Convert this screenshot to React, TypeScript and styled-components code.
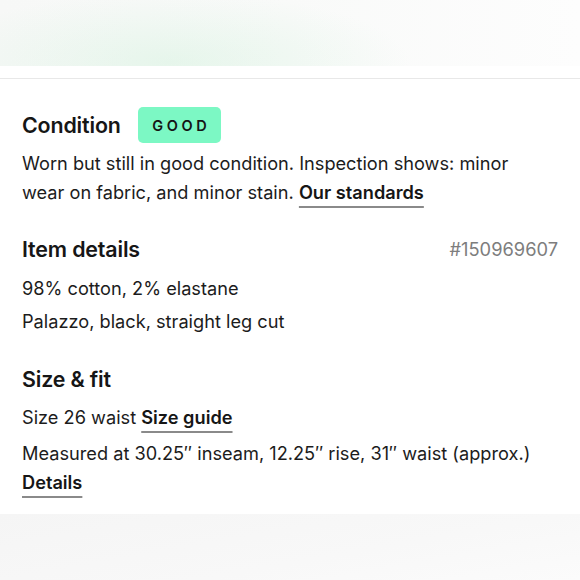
import React from "react";
import styled, { createGlobalStyle } from "styled-components";

const Global = createGlobalStyle`
  html, body { margin: 0; padding: 0; background: #fff; }
  body { font-family: Inter, "Noto Sans", sans-serif; color: #1c1c1c; -webkit-font-smoothing: antialiased; }
`;

const Page = styled.div`
  width: 580px;
  height: 580px;
  overflow: hidden;
  display: flex;
  flex-direction: column;
  background: #fff;
`;

const TopBlur = styled.div`
  height: 66px;
  flex: none;
  background:
    radial-gradient(ellipse 240px 70px at 170px 62px, rgba(212, 242, 222, 0.5), rgba(255,255,255,0) 100%),
    linear-gradient(90deg, #f7f8f7 0%, #f9faf9 50%, #fdfdfd 100%);
`;

const Divider = styled.div`
  margin-top: 12px;
  height: 1px;
  background: #e8e8e8;
  flex: none;
`;

const Content = styled.div`
  padding: 28px 22px 0 22px;
  flex: 1;
  display: flex;
  flex-direction: column;
`;

const Section = styled.section<{ $gap?: number }>`
  display: flex;
  flex-direction: column;
  margin-bottom: ${(p) => p.$gap ?? 0}px;
`;

const HeadRow = styled.div`
  display: flex;
  align-items: center;
  justify-content: space-between;
`;

const HeadLeft = styled.div`
  display: flex;
  align-items: center;
  gap: 17px;
`;

const Heading = styled.h2`
  margin: 0;
  font-size: 21.4px;
  font-weight: 600;
  line-height: 28px;
  letter-spacing: -0.15px;
  color: #161616;
`;

const Badge = styled.span`
  display: inline-flex;
  align-items: center;
  justify-content: center;
  width: 83px;
  height: 36px;
  border-radius: 5px;
  background: #7cf8c4;
  font-size: 14.5px;
  font-weight: 600;
  letter-spacing: 3.6px;
  padding-left: 4px;
  box-sizing: border-box;
  color: #151515;
`;

const ItemId = styled.span`
  font-size: 18.3px;
  color: #7d7d7d;
  font-weight: 400;
`;

const Para = styled.p<{ $mt?: number }>`
  margin: ${(p) => p.$mt ?? 0}px 0 0 0;
  max-width: 516px;
  font-size: 18.2px;
  line-height: 29px;
  font-weight: 400;
  color: #1c1c1c;
`;

const Link = styled.a`
  font-weight: 600;
  color: #161616;
  text-decoration: underline;
  text-decoration-color: #8a8a8a;
  text-decoration-thickness: 2px;
  text-underline-offset: 7px;
`;

const BottomShade = styled.div`
  flex: none;
  height: 66px;
  background: linear-gradient(170deg, #f5f5f5 0%, #f8f8f8 60%, #fbfbfb 100%);
`;

export default function App() {
  return (
    <Page>
      <Global />
      <TopBlur />
      <Divider />
      <Content>
        <Section $gap={28}>
          <HeadLeft>
            <Heading>Condition</Heading>
            <Badge>GOOD</Badge>
          </HeadLeft>
          <Para $mt={6}>
            Worn but still in good condition. Inspection shows: minor wear on fabric, and minor stain.{" "}
            <Link href="#">Our standards</Link>
          </Para>
        </Section>
        <Section $gap={29}>
          <HeadRow>
            <Heading>Item details</Heading>
            <ItemId>#150969607</ItemId>
          </HeadRow>
          <Para $mt={11}>98% cotton, 2% elastane</Para>
          <Para $mt={4}>Palazzo, black, straight leg cut</Para>
        </Section>
        <Section>
          <Heading>Size &amp; fit</Heading>
          <Para $mt={10}>
            Size 26 waist <Link href="#">Size guide</Link>
          </Para>
          <Para $mt={7}>
            Measured at 30.25″ inseam, 12.25″ rise, 31″ waist (approx.){" "}
            <Link href="#">Details</Link>
          </Para>
        </Section>
      </Content>
      <BottomShade />
    </Page>
  );
}
